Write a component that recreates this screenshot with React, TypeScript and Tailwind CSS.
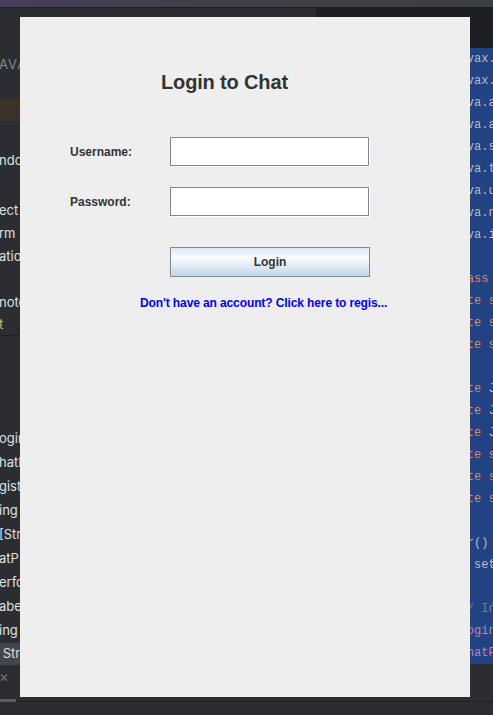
import React from "react";

type Seg = { t: string; c?: string };
type CodeLine = Seg[];

const K = "text-[#cf8e6d]";
const P = "text-[#c77dbb]";
const G = "text-[#7a7e85]";

const code: CodeLine[] = [
  [{ t: "import ", c: K }, { t: "javax.swing.*;" }],
  [{ t: "import ", c: K }, { t: "javax.swing.border.*;" }],
  [{ t: "import ", c: K }, { t: "java.awt.*;" }],
  [{ t: "import ", c: K }, { t: "java.awt.event.*;" }],
  [{ t: "import ", c: K }, { t: "java.sql.*;" }],
  [{ t: "import ", c: K }, { t: "java.text.*;" }],
  [{ t: "import ", c: K }, { t: "java.util.*;" }],
  [{ t: "import ", c: K }, { t: "java.net.*;" }],
  [{ t: "import ", c: K }, { t: "java.io.*;" }],
  [],
  [{ t: "public class ", c: K }, { t: "LoginForm {" }],
  [{ t: "    private static ", c: K }, { t: "final int PORT;" }],
  [{ t: "    private static ", c: K }, { t: "String host;" }],
  [{ t: "    private static ", c: K }, { t: "Socket socket;" }],
  [],
  [{ t: "    private ", c: K }, { t: "JTextField user;" }],
  [{ t: "    private ", c: K }, { t: "JPasswordField pass;" }],
  [{ t: "    private ", c: K }, { t: "JButton login;" }],
  [{ t: "    private static ", c: K }, { t: "String name;" }],
  [{ t: "    private static ", c: K }, { t: "String token;" }],
  [{ t: "    private static ", c: K }, { t: "String room;" }],
  [],
  [{ t: "    Sender() {" }],
  [{ t: "          setTitle(\"Login\");" }],
  [],
  [{ t: "        // Initialize", c: G }],
  [{ t: "        loginButton", c: P }, { t: " = new JButton();" }],
  [{ t: "        chatPanel", c: P }, { t: " = new JPanel();" }],
];

type LeftRow = { h: number; text?: string; cls?: string; bg?: string; line?: boolean };

const leftRows: LeftRow[] = [
  { h: 45 },
  { h: 24, text: "AVA", cls: "text-[#868a91] tracking-[1px]" },
  { h: 22 },
  { h: 22, bg: "bg-[#3b3226]" },
  { h: 28 },
  { h: 24, text: "ndow" },
  { h: 26 },
  { h: 24, text: "ect" },
  { h: 22, text: "rm" },
  { h: 24, text: "ation" },
  { h: 22 },
  { h: 24, text: "note" },
  { h: 20, text: "t", cls: "text-[#d5b778]" },
  { h: 1, line: true },
  { h: 91 },
  { h: 24, text: "ogin" },
  { h: 24, text: "hatP" },
  { h: 24, text: "gist" },
  { h: 24, text: "ing" },
  { h: 24, text: "[Str" },
  { h: 24, text: "atP" },
  { h: 24, text: "erfo" },
  { h: 24, text: "abel" },
  { h: 24, text: "ing" },
  { h: 22, text: " Str", bg: "bg-[#43454a]" },
  { h: 24, text: "×", cls: "text-[#6f737a] text-[15px]" },
];

export default function App() {
  return (
    <div className="relative w-[493px] h-[715px] overflow-hidden bg-[#2b2d30] flex flex-col font-['Inter','Liberation_Sans',sans-serif]">
      {/* top title strip */}
      <div className="h-[7px] shrink-0 bg-linear-to-r from-[#4a3d5d] via-[#3e3f47] via-45% to-[#3c3f41]" />
      <div className="h-px shrink-0 bg-[#1e1f22]" />

      {/* IDE body */}
      <div className="h-[689px] shrink-0 flex flex-row">
        {/* project panel */}
        <div className="w-[316px] shrink-0 flex flex-col bg-[#2b2d30] text-[13px] text-[#dfe1e5]">
          {leftRows.map((r, i) => (
            <div
              key={i}
              style={{ height: r.h }}
              className={`shrink-0 flex items-center whitespace-pre overflow-hidden ${r.bg ?? ""} ${r.line ? "bg-[#1e1f22]" : ""}`}
            >
              {r.text ? <span className={`-ml-[1px] ${r.cls ?? ""}`}>{r.text}</span> : null}
            </div>
          ))}
        </div>

        {/* editor */}
        <div className="flex-1 min-w-0 overflow-hidden flex flex-col bg-[#1e1f22]">
          <div className="h-[40px] shrink-0 bg-[#1e1f22]" />
          <div className="shrink-0 bg-[#214283] flex flex-col font-['Liberation_Mono','DejaVu_Sans_Mono',monospace] text-[12px] text-[#bcbec4]">
            {code.map((line, i) => (
              <div key={i} className="h-[22px] leading-[22px] pl-[86px] whitespace-pre overflow-hidden">
                {line.map((s, j) => (
                  <span key={j} className={s.c ?? ""}>
                    {s.t}
                  </span>
                ))}
              </div>
            ))}
          </div>
          <div className="flex-1 bg-[#2b2d30]" />
        </div>
      </div>

      {/* bottom strip */}
      <div className="relative flex-1 bg-[#2b2d30]">
        <div className="mt-[4px] h-px bg-[#1e1f22]" />
        <div className="absolute left-0 top-[2px] w-[16px] h-[3px] rounded-[1px] bg-[#5a5d63]" />
      </div>

      {/* Swing login window */}
      <div className="absolute left-[20px] top-[17px] w-[450px] h-[680px] bg-[#eeeeee] flex flex-col font-['Liberation_Sans','Arial',sans-serif] text-[#333333]">
        <div className="pt-[53px] pl-[141px] text-[20px] leading-[24px] font-bold tracking-[-0.15px]">Login to Chat</div>

        <div className="mt-[43px] flex items-center pl-[50px]">
          <div className="w-[100px] text-[12px] font-bold pt-px">Username:</div>
          <div className="w-[199px] h-[29px] bg-white border border-[#7a8a99] shadow-[1px_1px_0_#ffffff]" />
        </div>

        <div className="mt-[21px] flex items-center pl-[50px]">
          <div className="w-[100px] text-[12px] font-bold pt-px">Password:</div>
          <div className="w-[199px] h-[29px] bg-white border border-[#7a8a99] shadow-[1px_1px_0_#ffffff]" />
        </div>

        <div className="mt-[31px] ml-[150px] w-[200px] h-[30px] border border-[#7a8a99] bg-linear-to-b from-[#dce7f2] via-[#fbfcfe] via-35% to-[#c3d5e7] flex items-center justify-center text-[12px] font-bold text-[#333333]">
          Login
        </div>

        <div className="mt-[19px] ml-[120px] text-[12px] leading-[14px] font-bold text-[#0000ff] whitespace-nowrap tracking-[-0.11px]">
          Don't have an account? Click here to regis...
        </div>
      </div>
    </div>
  );
}
